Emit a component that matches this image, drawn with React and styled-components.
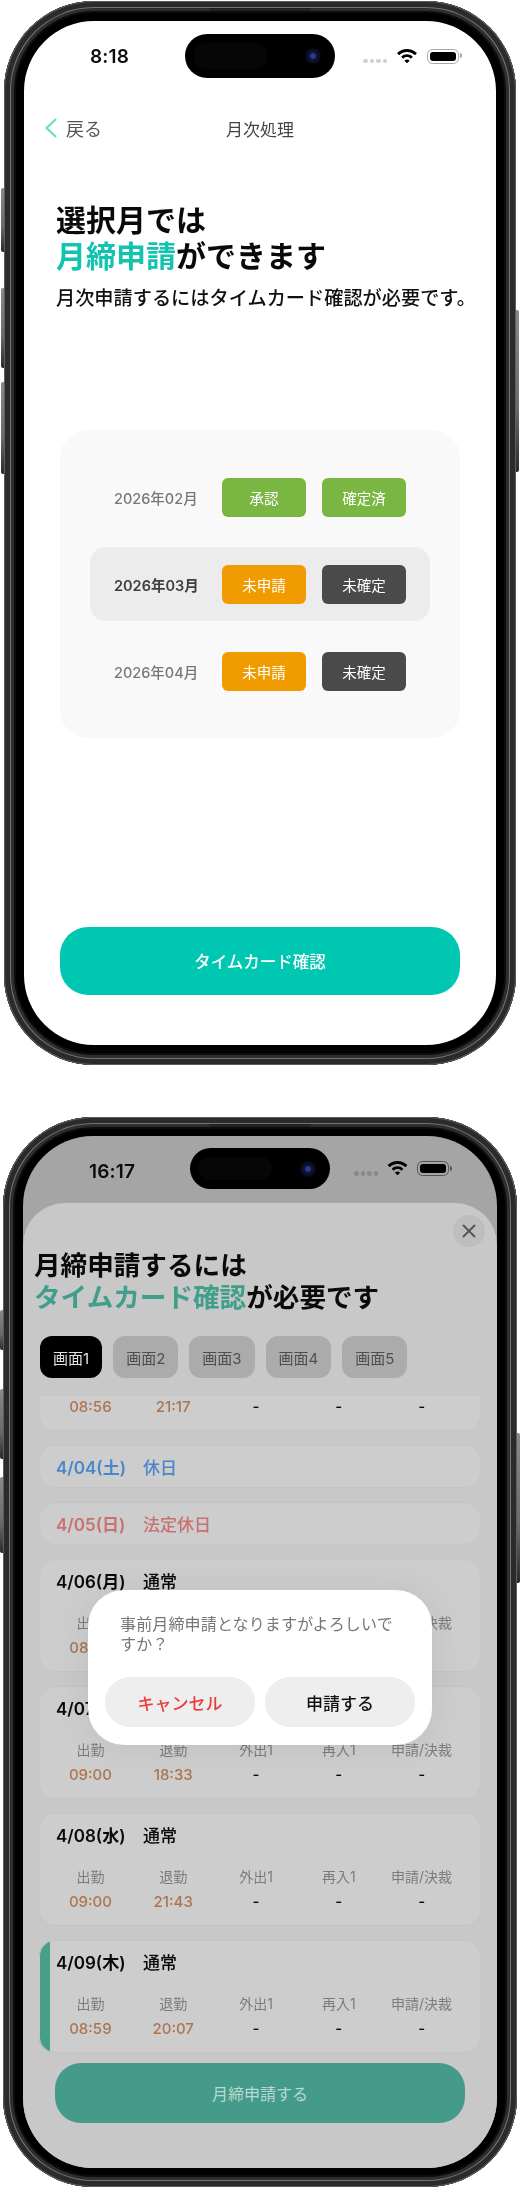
import React from "react";
import styled, { createGlobalStyle } from "styled-components";

const Global = createGlobalStyle`
  html, body { margin: 0; padding: 0; background: #fff; }
  body { font-family: "Inter", "Noto Sans CJK JP", sans-serif; width: 520px; }
  * { box-sizing: border-box; }
`;

const Page = styled.div`
  width: 520px;
  height: 2188px;
  padding-top: 1px;
  display: flex;
  flex-direction: column;
  align-items: center;
  gap: 52px;
  overflow: hidden;
  filter: blur(0.35px);
`;

const Phone = styled.div`
  position: relative;
  width: ${(p) => p.$w}px;
  height: ${(p) => p.$h}px;
  padding: ${(p) => p.$py}px 20px;
  border-radius: 90px;
  background: #000;
  box-shadow:
    inset 0 0 0 1px #5e5e5e,
    inset 0 0 0 6px #2b2b2b,
    inset 0 0 0 7px #747474,
    inset 0 0 0 10px #2e2e2e,
    inset 0 0 0 12px #0c0c0c;
  display: flex;
`;

const Speaker = styled.span`
  position: absolute;
  top: 7px;
  left: 50%;
  width: 102px;
  height: 3px;
  margin-left: -51px;
  border-radius: 0 0 3px 3px;
  background: #222;
`;

const SideKey = styled.span`
  position: absolute;
  width: 3px;
  top: ${(p) => p.$top}px;
  height: ${(p) => p.$h}px;
  ${(p) => (p.$right ? "right: -3px; border-radius: 0 2px 2px 0;" : "left: -3px; border-radius: 2px 0 0 2px;")}
  background: linear-gradient(180deg, #8a8a84 0%, #6b6b68 60%, #2a2a2a 100%);
`;

const Screen = styled.div`
  position: relative;
  flex: 1;
  min-width: 0;
  border-radius: 70px;
  overflow: hidden;
  display: flex;
  flex-direction: column;
  background: ${(p) => p.$bg};
`;

const StatusBar = styled.div`
  flex: none;
  display: grid;
  grid-template-columns: 1fr ${(p) => p.$islandW}px 1fr;
  align-items: center;
  height: ${(p) => p.$islandH}px;
  margin-top: ${(p) => p.$top}px;
`;

const Clock = styled.div`
  padding-left: 66px;
  padding-top: ${(p) => p.$shift}px;
  font-size: 19px;
  font-weight: 600;
  color: #0c0c0c;
  letter-spacing: 0.2px;
`;

const Island = styled.div`
  position: relative;
  height: 100%;
  border-radius: 24px;
  background: #000;
`;

const IslandPill = styled.span`
  position: absolute;
  left: 8px;
  top: 9px;
  bottom: 9px;
  width: 74px;
  border-radius: 14px;
  background: #060606;
`;

const Lens = styled.span`
  position: absolute;
  right: 14px;
  top: 50%;
  width: 16px;
  height: 16px;
  margin-top: -8px;
  border-radius: 50%;
  background: radial-gradient(circle, #2b3f86 0 18%, #10163c 32%, #0b0a1c 60%, #050308 100%);
`;

const StatusRight = styled.div`
  display: flex;
  align-items: center;
  gap: ${(p) => p.$gap}px;
  padding-left: ${(p) => p.$left}px;
`;

const Dots = styled.div`
  display: flex;
  gap: 2px;
  margin-top: 10px;
`;

const Dot = styled.span`
  width: 4.5px;
  height: 4.5px;
  border-radius: 50%;
  background: ${(p) => p.$c};
`;

const Battery = styled.div`
  position: relative;
  width: 32px;
  height: 15px;
  border: 1px solid ${(p) => p.$line};
  border-radius: 5.5px;
  padding: 2px;
  &::after {
    content: "";
    position: absolute;
    right: -3.5px;
    top: 3.5px;
    width: 2px;
    height: 5px;
    border-radius: 0 2px 2px 0;
    background: ${(p) => p.$line};
  }
`;

const BatteryFill = styled.div`
  width: 100%;
  height: 100%;
  border-radius: 3px;
  background: #000;
`;

const Nav = styled.div`
  flex: none;
  height: 100px;
  display: grid;
  grid-template-columns: 1fr auto 1fr;
  align-items: center;
  padding: 0 21px;
`;

const Back = styled.div`
  display: flex;
  align-items: center;
  gap: 9px;
  font-size: 18px;
  color: #555;
`;

const NavTitle = styled.div`
  font-size: 17px;
  color: #444;
`;

const Hero = styled.div`
  margin: 24px 0 0 32px;
`;

const HeroTitle = styled.h1`
  margin: 0;
  font-size: 30px;
  line-height: 36px;
  font-weight: 700;
  color: #0a0a0a;
`;

const Accent = styled.span`
  color: ${(p) => p.$c};
`;

const HeroSub = styled.p`
  margin: 10px 0 0;
  font-size: 19.2px;
  line-height: 28px;
  font-weight: 500;
  white-space: nowrap;
  color: #111;
`;

const MonthCard = styled.div`
  margin: 118px 36px 0;
  padding: 30px;
  height: 308px;
  border-radius: 28px;
  background: #f9f9f9;
  display: flex;
  flex-direction: column;
  justify-content: space-between;
`;

const MonthRow = styled.div`
  height: 74px;
  padding-left: 24px;
  display: flex;
  align-items: center;
  gap: 16px;
  border-radius: 16px;
  background: ${(p) => (p.$active ? "#ececec" : "transparent")};
`;

const MonthLabel = styled.div`
  width: 92px;
  font-size: 14.5px;
  font-weight: ${(p) => (p.$active ? 600 : 500)};
  color: ${(p) => (p.$active ? "#3e3e3e" : "#777")};
  white-space: nowrap;
`;

const Badge = styled.div`
  width: 84px;
  height: 39px;
  display: flex;
  align-items: center;
  justify-content: center;
  border-radius: 6px;
  font-size: 14.5px;
  font-weight: 400;
  color: #fff;
  background: ${(p) => p.$bg};
`;

const PrimaryButton = styled.div`
  flex: none;
  height: 68px;
  margin: auto 36px 50px;
  border-radius: 28px;
  display: flex;
  align-items: center;
  justify-content: center;
  font-size: 16.5px;
  font-weight: 500;
  color: #fff;
  background: #00c7b1;
`;

const Sheet = styled.div`
  position: relative;
  flex: 1;
  min-height: 0;
  margin-top: 14px;
  border-radius: 42px 42px 0 0;
  background: #c8c8c8;
  display: flex;
  flex-direction: column;
`;

const CloseButton = styled.div`
  position: absolute;
  top: 12px;
  right: 12px;
  width: 32px;
  height: 32px;
  border-radius: 50%;
  background: #bebebe;
  display: flex;
  align-items: center;
  justify-content: center;
`;

const SheetTitle = styled.h2`
  flex: none;
  margin: 46px 0 0 11px;
  font-size: 26.6px;
  line-height: 32px;
  font-weight: 700;
  color: #0a0a0a;
`;

const Tabs = styled.div`
  flex: none;
  display: flex;
  gap: 11px;
  margin: 23px 0 0 17px;
`;

const Tab = styled.div`
  height: 42px;
  padding: 0 13px;
  display: flex;
  align-items: center;
  border-radius: 12px;
  font-size: 15px;
  font-weight: 400;
  background: ${(p) => (p.$active ? "#000" : "#ababab")};
  color: ${(p) => (p.$active ? "#e2e2e2" : "#4e4e4e")};
`;

const List = styled.div`
  flex: 1;
  min-height: 0;
  margin-top: 18px;
  padding: 0 16px;
  overflow: hidden;
`;

const ListInner = styled.div`
  margin-top: -78px;
  display: flex;
  flex-direction: column;
  gap: 14px;
`;

const DayCard = styled.div`
  height: ${(p) => (p.$holiday ? 43 : 113)}px;
  padding: 9px 18px 0 10px;
  border-radius: 16px;
  background: ${(p) => (p.$accent ? "linear-gradient(90deg, #459f8b 11px, #cdcdcd 11px)" : "#cdcdcd")};
  box-shadow: inset 0 0 0 1px #c5c5c5;
`;

const DayHead = styled.div`
  margin-left: 7px;
  display: flex;
  height: 24px;
  align-items: center;
  font-size: 17px;
  font-weight: 600;
  color: ${(p) => p.$c};
`;

const DayDate = styled.span`
  width: 87px;
  flex: none;
`;

const DayType = styled.span`
  font-weight: 500;
`;

const DayGrid = styled.div`
  margin-top: 21px;
  display: grid;
  grid-template-columns: repeat(5, 1fr);
  text-align: center;
`;

const CellLabel = styled.div`
  font-size: 14px;
  line-height: 20px;
  color: #7c7c7c;
  white-space: nowrap;
`;

const CellValue = styled.div`
  margin-top: 3px;
  font-size: 15px;
  line-height: 24px;
  font-weight: 500;
  color: ${(p) => (p.$time ? "#ab7550" : "#0a0a0a")};
`;

const SubmitButton = styled.div`
  flex: none;
  height: 60px;
  margin: 5px 32px 45px;
  border-radius: 26px;
  display: flex;
  align-items: center;
  justify-content: center;
  font-size: 16px;
  font-weight: 400;
  color: #b9d8d1;
  background: #449b89;
`;

const Dialog = styled.div`
  position: absolute;
  left: 65px;
  top: 387px;
  width: 344px;
  height: 155px;
  padding: 25px 17px 0;
  border-radius: 36px;
  background: #fff;
  box-shadow: 0 0 36px rgba(0, 0, 0, 0.07);
`;

const DialogText = styled.p`
  margin: 0 0 0 15px;
  width: 284px;
  font-size: 16px;
  line-height: 19.5px;
  letter-spacing: 0.15px;
  color: #777;
`;

const DialogActions = styled.div`
  margin-top: 23px;
  display: flex;
  gap: 10px;
`;

const DialogButton = styled.div`
  flex: 1;
  height: 50px;
  border-radius: 25px;
  display: flex;
  align-items: center;
  justify-content: center;
  font-size: 17px;
  font-weight: 500;
  background: #eeeeee;
  color: ${(p) => p.$c};
`;

const Wifi = ({ w, h }) => (
  <svg width={w} height={h} viewBox="0 0 20 15" fill="#000">
    <path d="M10 0C6.3 0 2.9 1.4.4 3.8c-.2.2-.2.4 0 .6l1.5 1.5c.2.2.4.2.6 0C4.5 4 7.1 2.9 10 2.9s5.5 1.1 7.5 3c.2.2.4.2.6 0l1.5-1.5c.2-.2.2-.4 0-.6C17.1 1.4 13.7 0 10 0z" />
    <path d="M10 5.2c-2.1 0-4.1.8-5.6 2.2-.2.2-.2.4 0 .6l1.5 1.5c.2.2.4.2.6 0 1-.9 2.2-1.4 3.5-1.4s2.5.5 3.5 1.4c.2.2.4.2.6 0l1.5-1.5c.2-.2.2-.4 0-.6-1.5-1.4-3.5-2.2-5.6-2.2z" />
    <path d="M10 10.4c-.9 0-1.7.3-2.3.9-.2.2-.2.4 0 .6l2 2.2c.2.2.4.2.6 0l2-2.2c.2-.2.2-.4 0-.6-.6-.6-1.4-.9-2.3-.9z" />
  </svg>
);

const Chevron = () => (
  <svg width="12" height="20" viewBox="0 0 12 20" fill="none" stroke="#69d8c6" strokeWidth="2" strokeLinecap="round" strokeLinejoin="round">
    <path d="M10.5 1.5 1.5 10l9 8.5" />
  </svg>
);

const CloseIcon = () => (
  <svg width="14" height="14" viewBox="0 0 14 14" fill="none" stroke="#555" strokeWidth="1.9" strokeLinecap="round">
    <path d="M1.5 1.5l11 11M12.5 1.5l-11 11" />
  </svg>
);

const Status = ({ time, islandW, islandH, top, shift, left, gap, dot, line, wifiW }) => (
  <StatusBar $islandW={islandW} $islandH={islandH} $top={top}>
    <Clock $shift={shift}>{time}</Clock>
    <Island>
      <IslandPill />
      <Lens />
    </Island>
    <StatusRight $left={left} $gap={gap}>
      <Dots>
        {[0, 1, 2, 3].map((i) => (
          <Dot key={i} $c={dot} />
        ))}
      </Dots>
      <Wifi w={wifiW} h={15} />
      <Battery $line={line}>
        <BatteryFill />
      </Battery>
    </StatusRight>
  </StatusBar>
);

const months = [
  { label: "2026年02月", a: ["承認", "#7ab642"], b: ["確定済", "#7ab642"] },
  { label: "2026年03月", a: ["未申請", "#f09c00"], b: ["未確定", "#4a4a4a"], active: true },
  { label: "2026年04月", a: ["未申請", "#f09c00"], b: ["未確定", "#4a4a4a"] },
];

const cols = ["出勤", "退勤", "外出1", "再入1", "申請/決裁"];

const days = [
  { date: "4/03(金)", type: "通常", c: "#0a0a0a", inT: "08:56", outT: "21:17" },
  { date: "4/04(土)", type: "休日", c: "#4a86c8", holiday: true },
  { date: "4/05(日)", type: "法定休日", c: "#c97070", holiday: true },
  { date: "4/06(月)", type: "通常", c: "#0a0a0a", inT: "08:58", outT: "19:12" },
  { date: "4/07(火)", type: "通常", c: "#0a0a0a", inT: "09:00", outT: "18:33" },
  { date: "4/08(水)", type: "通常", c: "#0a0a0a", inT: "09:00", outT: "21:43" },
  { date: "4/09(木)", type: "通常", c: "#0a0a0a", inT: "08:59", outT: "20:07", accent: true },
];

export default function App() {
  return (
    <>
      <Global />
      <Page>
        <Phone $w={512} $h={1064} $py={20}>
          <Speaker />
          <SideKey $top={187} $h={64} />
          <SideKey $top={287} $h={80} />
          <SideKey $top={381} $h={92} />
          <SideKey $right $top={309} $h={162} />
          <Screen $bg="#fff">
            <Status time="8:18" islandW={150} islandH={44} top={13} shift={0} left={28} gap={10} dot="#cfcfcf" line="#a8a8a8" wifiW={20} />
            <Nav>
              <Back>
                <Chevron />
                戻る
              </Back>
              <NavTitle>月次処理</NavTitle>
            </Nav>
            <Hero>
              <HeroTitle>
                選択月では
                <br />
                <Accent $c="#12c4ae">月締申請</Accent>ができます
              </HeroTitle>
              <HeroSub>月次申請するにはタイムカード確認が必要です。</HeroSub>
            </Hero>
            <MonthCard>
              {months.map((m) => (
                <MonthRow key={m.label} $active={m.active}>
                  <MonthLabel $active={m.active}>{m.label}</MonthLabel>
                  <Badge $bg={m.a[1]}>{m.a[0]}</Badge>
                  <Badge $bg={m.b[1]}>{m.b[0]}</Badge>
                </MonthRow>
              ))}
            </MonthCard>
            <PrimaryButton>タイムカード確認</PrimaryButton>
          </Screen>
        </Phone>

        <Phone $w={514} $h={1070} $py={19}>
          <Speaker />
          <SideKey $top={193} $h={40} />
          <SideKey $top={272} $h={70} />
          <SideKey $top={360} $h={76} />
          <SideKey $right $top={316} $h={150} />
          <Screen $bg="#a5a5a5">
            <Status time="16:17" islandW={140} islandH={41} top={12} shift={5} left={24} gap={9} dot="#8a8a8a" line="#555" wifiW={21} />
            <Sheet>
              <CloseButton>
                <CloseIcon />
              </CloseButton>
              <SheetTitle>
                月締申請するには
                <br />
                <Accent $c="#3f9f8b">タイムカード確認</Accent>が必要です
              </SheetTitle>
              <Tabs>
                {[1, 2, 3, 4, 5].map((n) => (
                  <Tab key={n} $active={n === 1}>
                    画面{n}
                  </Tab>
                ))}
              </Tabs>
              <List>
                <ListInner>
                  {days.map((d) => (
                    <DayCard key={d.date} $holiday={d.holiday} $accent={d.accent}>
                      <DayHead $c={d.c}>
                        <DayDate>{d.date}</DayDate>
                        <DayType>{d.type}</DayType>
                      </DayHead>
                      {!d.holiday && (
                        <DayGrid>
                          {cols.map((c, i) => (
                            <div key={c}>
                              <CellLabel>{c}</CellLabel>
                              <CellValue $time={i < 2}>{i === 0 ? d.inT : i === 1 ? d.outT : "-"}</CellValue>
                            </div>
                          ))}
                        </DayGrid>
                      )}
                    </DayCard>
                  ))}
                </ListInner>
              </List>
              <SubmitButton>月締申請する</SubmitButton>
              <Dialog>
                <DialogText>事前月締申請となりますがよろしいですか？</DialogText>
                <DialogActions>
                  <DialogButton $c="#ef3b3b">キャンセル</DialogButton>
                  <DialogButton $c="#111">申請する</DialogButton>
                </DialogActions>
              </Dialog>
            </Sheet>
          </Screen>
        </Phone>
      </Page>
    </>
  );
}
